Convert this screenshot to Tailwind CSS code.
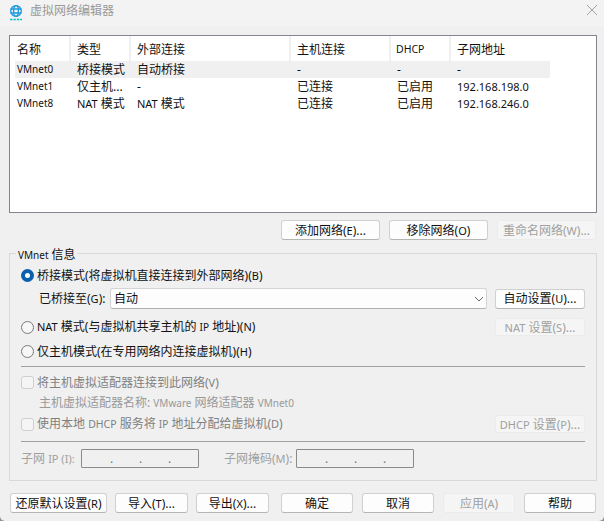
<!DOCTYPE html>
<html lang="zh">
<head>
<meta charset="UTF-8">
<script src="https://cdn.jsdelivr.net/npm/@tailwindcss/browser@4"></script>
<title>虚拟网络编辑器</title>
</head>
<body class="bg-[#8f8f8f]">
<div class="w-[604px] h-[521px] overflow-hidden rounded-b-[5px] bg-[#f0f0f0] flex flex-col text-[12px] leading-[17px] text-[#111] font-['Noto_Sans','Noto_Sans_CJK_SC',sans-serif]">

  <!-- title bar -->
  <div class="h-[26px] shrink-0 bg-[#f3f3f3] flex items-center pl-[9px] pr-[6px] pb-[6px]">
    <svg width="14" height="16" viewBox="0 0 14 16" fill="none" stroke="#1c9ade" stroke-width="1.3" class="mt-[6px]">
      <circle cx="7" cy="6" r="5.3"/>
      <ellipse cx="7" cy="6" rx="2.4" ry="5.3"/>
      <path d="M1.5 4h11M1.5 8h11"/>
      <path d="M1 14.5h12" stroke="#00c4c0" stroke-width="1.3" stroke-dasharray="2.4 1"/>
    </svg>
    <span class="ml-[7px] text-[#999]">虚拟网络编辑器</span>
    <svg class="ml-auto" width="12" height="12" viewBox="0 0 12 12" stroke="#a3a3a3" stroke-width="1" fill="none"><path d="M1 1l10 10M11 1L1 11"/></svg>
  </div>

  <div class="flex-1 flex flex-col pl-[9px] pr-[7px] pt-[9px]">
    <!-- network list -->
    <div class="h-[178px] shrink-0 w-[588px] bg-white border border-[#82858b] pl-[5px]">
      <div class="w-[535px]">
        <div class="grid grid-cols-[56px_60px_160px_100px_60px_100px] h-[25px] items-center">
          <div class="h-full border-r-2 border-[#f0f0f0] pl-[2px] pt-[1px] flex items-center">名称</div>
          <div class="h-full border-r-2 border-[#f0f0f0] pl-[6px] pt-[1px] flex items-center">类型</div>
          <div class="h-full border-r-2 border-[#f0f0f0] pl-[6px] pt-[1px] flex items-center">外部连接</div>
          <div class="h-full border-r-2 border-[#f0f0f0] pl-[6px] pt-[1px] flex items-center">主机连接</div>
          <div class="h-full border-r-2 border-[#f0f0f0] pl-[5px] pt-[1px] flex items-center"><span class="text-[10.5px]">DHCP</span></div>
          <div class="h-full pl-[6px] pt-[1px] flex items-center">子网地址</div>
        </div>
        <div class="grid grid-cols-[56px_60px_160px_100px_60px_100px] h-[17px] items-center bg-[#f0f0f0]">
          <div class="pl-[2px] text-[10px]">VMnet0</div><div class="pl-[6px]">桥接模式</div><div class="pl-[6px]">自动桥接</div><div class="pl-[6px]">-</div><div class="pl-[6px]">-</div><div class="pl-[6px]">-</div>
        </div>
        <div class="grid grid-cols-[56px_60px_160px_100px_60px_100px] h-[17px] items-center">
          <div class="pl-[2px] text-[10px]">VMnet1</div><div class="pl-[6px]">仅主机...</div><div class="pl-[6px]">-</div><div class="pl-[6px]">已连接</div><div class="pl-[6px]">已启用</div><div class="pl-[6px] text-[11px]">192.168.198.0</div>
        </div>
        <div class="grid grid-cols-[56px_60px_160px_100px_60px_100px] h-[17px] items-center">
          <div class="pl-[2px] text-[10px]">VMnet8</div><div class="pl-[6px]"><span class="text-[11px]">NAT</span> 模式</div><div class="pl-[6px]"><span class="text-[11px]">NAT</span> 模式</div><div class="pl-[6px]">已连接</div><div class="pl-[6px]">已启用</div><div class="pl-[6px] text-[11px]">192.168.246.0</div>
        </div>
      </div>
    </div>

    <!-- list actions -->
    <div class="flex justify-end gap-[9px] mt-[7px] pr-[1px] shrink-0">
      <button class="w-[99px] h-[20px] rounded-[3px] bg-[#fdfdfd] border border-[#d0d0d0] border-b-[#b5b5b5]">添加网络(<span class="text-[11px]">E</span>)...</button>
      <button class="w-[99px] h-[20px] rounded-[3px] bg-[#fdfdfd] border border-[#d0d0d0] border-b-[#b5b5b5]">移除网络(<span class="text-[11px]">O</span>)</button>
      <button class="w-[99px] h-[20px] rounded-[3px] bg-[#f5f5f5] border border-[#ebebeb] text-[#a0a0a0]">重命名网络(<span class="text-[11px]">W</span>)...</button>
    </div>

    <!-- vmnet info group -->
    <div class="relative mt-[13px] h-[228px] shrink-0 w-[588px] border border-[#d9d9d9] px-[11px]">
      <span class="absolute left-[6px] top-[-8px] px-[2px] bg-[#f0f0f0]"><span class="text-[10px]">VMnet</span> 信息</span>

      <label class="flex items-center h-[14px] mt-[14px]">
        <span class="w-[13px] h-[13px] rounded-full border-[4px] border-[#0a5fae] bg-white shrink-0"></span>
        <span class="ml-[3px]">桥接模式(将虚拟机直接连接到外部网络)(<span class="text-[11px]">B</span>)</span>
      </label>

      <div class="flex items-center mt-[6px] h-[21px]">
        <span class="w-[89px] pl-[18px] shrink-0 whitespace-nowrap">已桥接至(<span class="text-[11px]">G</span>):</span>
        <div class="w-[377px] h-[21px] flex items-center justify-between bg-[#fdfdfd] border border-[#d4d4d4] border-b-[#b0b0b0] rounded-[3px] pl-[3px] pr-[2px]">
          <span>自动</span>
          <svg width="10" height="6" viewBox="0 0 10 6" fill="none" stroke="#666" stroke-width="1"><path d="M1 1l4 4 4-4"/></svg>
        </div>
        <button class="ml-[8px] w-[90px] h-[20px] rounded-[3px] bg-[#fdfdfd] border border-[#d0d0d0] border-b-[#b5b5b5]">自动设置(<span class="text-[11px]">U</span>)...</button>
      </div>

      <div class="flex items-center mt-[9px] h-[18px]">
        <span class="w-[13px] h-[13px] rounded-full border border-[#7a7a7a] bg-[#f6f6f6] shrink-0"></span>
        <span class="ml-[3px]"><span class="text-[11px]">NAT</span> 模式(与虚拟机共享主机的 <span class="text-[10px]">IP</span> 地址)(<span class="text-[11px]">N</span>)</span>
        <button class="ml-auto w-[90px] h-[18px] rounded-[3px] bg-[#f5f5f5] border border-[#ebebeb] text-[#a0a0a0]"><span class="text-[11px]">NAT</span> 设置(<span class="text-[11px]">S</span>)...</button>
      </div>

      <label class="flex items-center h-[14px] mt-[8px]">
        <span class="w-[13px] h-[13px] rounded-full border border-[#7a7a7a] bg-[#f6f6f6] shrink-0"></span>
        <span class="ml-[3px]">仅主机模式(在专用网络内连接虚拟机)(<span class="text-[11px]">H</span>)</span>
      </label>

      <div class="h-px bg-[#a0a0a0] mt-[8px]"></div>

      <div class="text-[#808080]">
        <label class="flex items-center h-[14px] mt-[8px]">
          <span class="w-[13px] h-[13px] rounded-[3px] border border-[#cfcfcf] bg-[#f5f5f5] shrink-0"></span>
          <span class="ml-[3px]">将主机虚拟适配器连接到此网络(<span class="text-[11px]">V</span>)</span>
        </label>
        <div class="pl-[18px] mt-[5px] h-[17px] whitespace-nowrap text-[#999]">主机虚拟适配器名称: <span class="text-[10px]">VMware</span> 网络适配器 <span class="text-[10px]">VMnet0</span></div>
        <div class="flex items-center h-[18px] mt-[4px]">
          <span class="w-[13px] h-[13px] rounded-[3px] border border-[#cfcfcf] bg-[#f5f5f5] shrink-0"></span>
          <span class="ml-[3px]">使用本地 <span class="text-[10.5px]">DHCP</span> 服务将 <span class="text-[10px]">IP</span> 地址分配给虚拟机(<span class="text-[11px]">D</span>)</span>
          <button class="ml-auto w-[90px] h-[18px] rounded-[3px] bg-[#f5f5f5] border border-[#ebebeb] text-[#a0a0a0]"><span class="text-[11px]">DHCP</span> 设置(<span class="text-[11px]">P</span>)...</button>
        </div>
      </div>

      <div class="h-px bg-[#a0a0a0] mt-[8px]"></div>

      <div class="flex items-center mt-[7px] h-[19px] text-[#a0a0a0]">
        <span class="w-[60px] shrink-0">子网 <span class="text-[11px]">IP (I):</span></span>
        <div class="w-[118px] h-[19px] border border-[#8a8a8a] rounded-[1px] grid grid-cols-4 items-center text-center text-[#777]"><span></span><span class="-ml-[28px]">.</span><span class="-ml-[28px]">.</span><span class="-ml-[28px]">.</span></div>
        <span class="ml-[25px] w-[72px] shrink-0 whitespace-nowrap">子网掩码(<span class="text-[11px]">M</span>):</span>
        <div class="w-[118px] h-[19px] border border-[#8a8a8a] rounded-[1px] grid grid-cols-4 items-center text-center text-[#777]"><span></span><span class="-ml-[28px]">.</span><span class="-ml-[28px]">.</span><span class="-ml-[28px]">.</span></div>
      </div>
    </div>

    <!-- dialog buttons -->
    <div class="flex mt-[12px] pl-[1px] shrink-0">
      <button class="w-[97px] h-[20px] rounded-[3px] bg-[#fdfdfd] border border-[#d0d0d0] border-b-[#b5b5b5] whitespace-nowrap">还原默认设置(<span class="text-[11px]">R</span>)</button>
      <button class="ml-[8px] w-[73px] h-[20px] rounded-[3px] bg-[#fdfdfd] border border-[#d0d0d0] border-b-[#b5b5b5]">导入(<span class="text-[11px]">T</span>)...</button>
      <button class="ml-[8px] w-[73px] h-[20px] rounded-[3px] bg-[#fdfdfd] border border-[#d0d0d0] border-b-[#b5b5b5]">导出(<span class="text-[11px]">X</span>)...</button>
      <button class="ml-[12px] w-[72px] h-[20px] rounded-[3px] bg-[#fdfdfd] border border-[#d0d0d0] border-b-[#b5b5b5]">确定</button>
      <button class="ml-[9px] w-[72px] h-[20px] rounded-[3px] bg-[#fdfdfd] border border-[#d0d0d0] border-b-[#b5b5b5]">取消</button>
      <button class="ml-[9px] w-[72px] h-[20px] rounded-[3px] bg-[#f5f5f5] border border-[#ebebeb] text-[#a0a0a0]">应用(<span class="text-[11px]">A</span>)</button>
      <button class="ml-[9px] w-[72px] h-[20px] rounded-[3px] bg-[#fdfdfd] border border-[#d0d0d0] border-b-[#b5b5b5]">帮助</button>
    </div>
  </div>
</div>
</body>
</html>
